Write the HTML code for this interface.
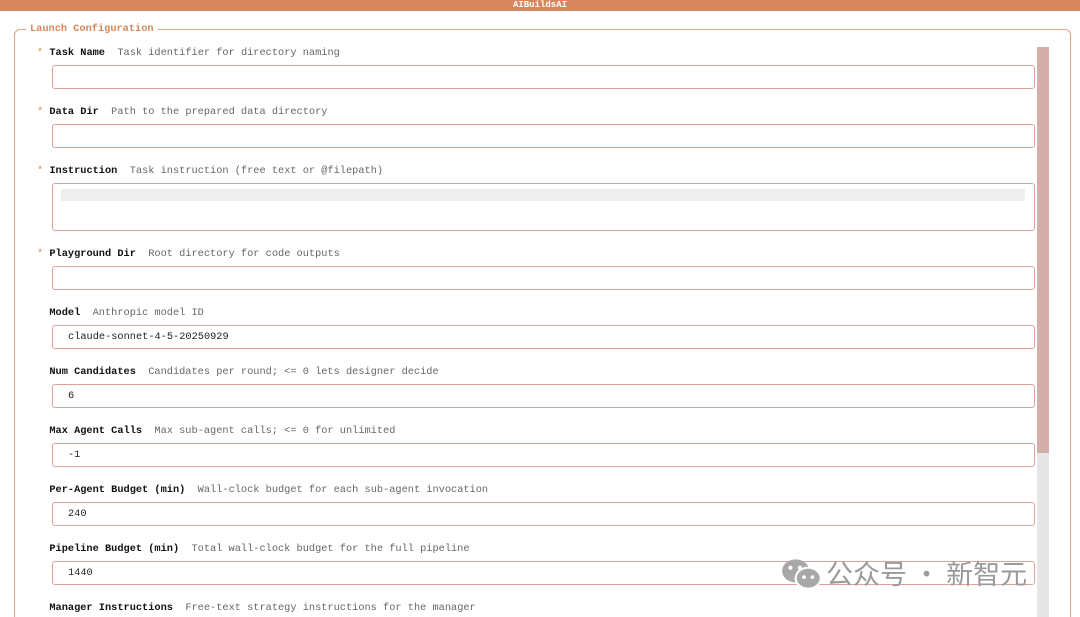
<!DOCTYPE html><html style="overflow:hidden"><head><style>
html,body{margin:0;width:1080px;height:617px;overflow:hidden}
body{background:#fff;font-family:"Liberation Mono",monospace;font-size:10.3px;position:relative}
.top{position:absolute;left:0;top:0;width:1080px;height:11px;background:#d6875e;color:#fff;font-size:9px;font-weight:bold;text-align:center;line-height:11px}
.fs{position:absolute;left:14px;top:29px;width:1055px;height:600px;border:1px solid #e0a485;border-radius:6px}
.lg{position:absolute;left:26px;top:23px;background:#fff;padding:0 4px;color:#d6875e;font-weight:bold}
.lab{position:absolute;left:37px;white-space:pre}
.st{color:#d6875e}
.b{font-weight:bold;color:#111}
.d{color:#666}
.in{position:absolute;left:52px;width:981px;height:22px;border:1px solid #dca2a0;border-radius:3px;padding:0;line-height:22px;color:#222}
.in span{margin-left:15px}
.sb{position:absolute;left:1037px;top:47px;width:12px;height:570px;background:#e6e6e6}
.th{position:absolute;left:1037px;top:47px;width:12px;height:406px;background:#d5aeab}
.wm{position:absolute;left:780px;top:555px;color:#9a9a9a;font-family:"Noto Sans CJK SC",sans-serif;font-size:27px;line-height:36px;white-space:nowrap}
</style></head><body>
<div class="top">AIBuildsAI</div>
<div class="fs"></div>
<div class="lg">Launch Configuration</div>
<div class="lab" style="top:47px"><span class="st">*</span> <span class="b">Task Name</span>  <span class="d">Task identifier for directory naming</span></div>
<div class="in" style="top:65px"></div>
<div class="lab" style="top:106px"><span class="st">*</span> <span class="b">Data Dir</span>  <span class="d">Path to the prepared data directory</span></div>
<div class="in" style="top:124px"></div>
<div class="lab" style="top:165px"><span class="st">*</span> <span class="b">Instruction</span>  <span class="d">Task instruction (free text or @filepath)</span></div>
<div class="in" style="top:183px;height:46px"><div style="position:absolute;left:8px;top:5px;width:964px;height:12px;background:#eee"></div></div>
<div class="lab" style="top:248px"><span class="st">*</span> <span class="b">Playground Dir</span>  <span class="d">Root directory for code outputs</span></div>
<div class="in" style="top:266px"></div>
<div class="lab" style="top:307px">  <span class="b">Model</span>  <span class="d">Anthropic model ID</span></div>
<div class="in" style="top:325px"><span>claude-sonnet-4-5-20250929</span></div>
<div class="lab" style="top:366px">  <span class="b">Num Candidates</span>  <span class="d">Candidates per round; &lt;= 0 lets designer decide</span></div>
<div class="in" style="top:384px"><span>6</span></div>
<div class="lab" style="top:425px">  <span class="b">Max Agent Calls</span>  <span class="d">Max sub-agent calls; &lt;= 0 for unlimited</span></div>
<div class="in" style="top:443px"><span>-1</span></div>
<div class="lab" style="top:484px">  <span class="b">Per-Agent Budget (min)</span>  <span class="d">Wall-clock budget for each sub-agent invocation</span></div>
<div class="in" style="top:502px"><span>240</span></div>
<div class="lab" style="top:543px">  <span class="b">Pipeline Budget (min)</span>  <span class="d">Total wall-clock budget for the full pipeline</span></div>
<div class="in" style="top:561px"><span>1440</span></div>
<div class="lab" style="top:602px">  <span class="b">Manager Instructions</span>  <span class="d">Free-text strategy instructions for the manager</span></div>
<div class="sb"></div><div class="th"></div>
<div class="wm"><svg width="46" height="34" viewBox="0 0 44 32" style="vertical-align:-7px"><ellipse cx="15" cy="13" rx="13" ry="11" fill="#a8a8a8"/><ellipse cx="27" cy="20" rx="12" ry="10" fill="#a8a8a8" stroke="#fff" stroke-width="2"/><circle cx="10" cy="10" r="2" fill="#fff"/><circle cx="19" cy="10" r="2" fill="#fff"/><circle cx="23" cy="19" r="1.8" fill="#fff"/><circle cx="31" cy="19" r="1.8" fill="#fff"/></svg>公众号 · 新智元</div>
</body></html>
